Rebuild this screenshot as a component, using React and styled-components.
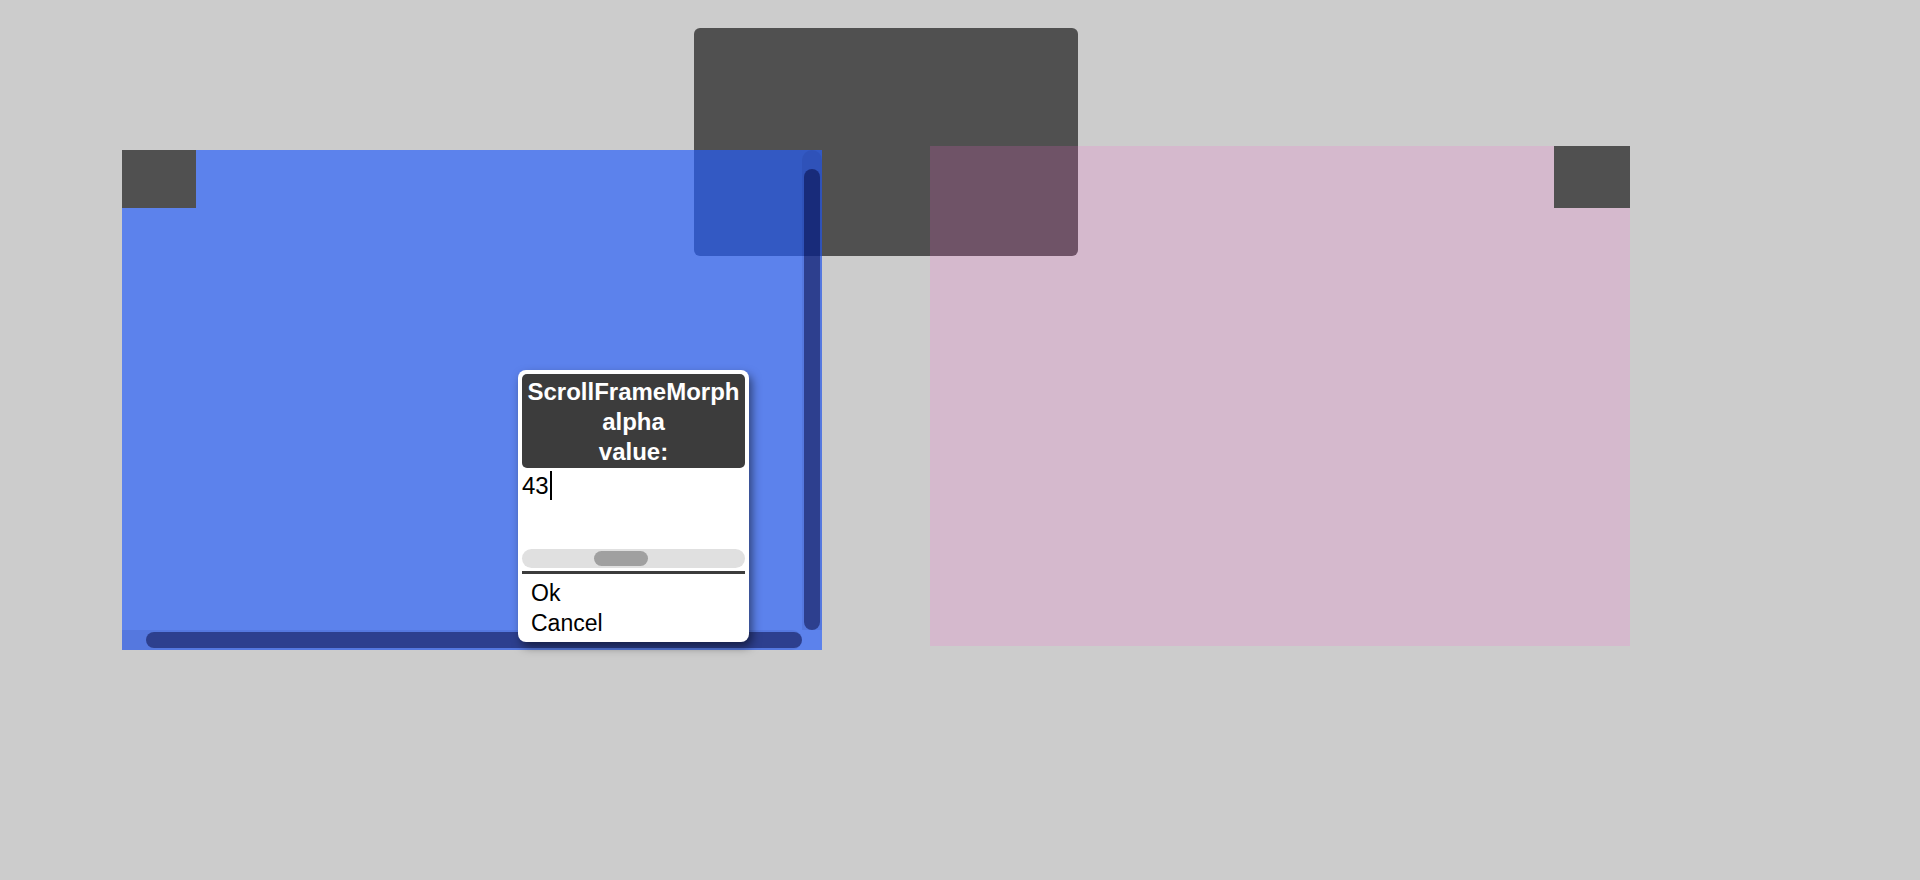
import React from 'react'
import styled, { createGlobalStyle } from 'styled-components'

const Global = createGlobalStyle`
    html, body {
        margin: 0;
        padding: 0;
        background: #cccccc;
        font-family: "Liberation Sans", Arial, sans-serif;
    }
`

const World = styled.div`
    position: relative;
    width: 1920px;
    height: 880px;
    overflow: hidden;
    background: #cccccc;
`

// morphs sit on a free canvas, their place is the content
const Morph = styled.div`
    position: absolute;
    left: ${p => p.x}px;
    top: ${p => p.y}px;
    width: ${p => p.w}px;
    height: ${p => p.h}px;
`

const DarkBox = styled(Morph)`
    background: #505050;
    border-radius: 6px;
`

const Frame = styled(Morph)`
    background: ${p => p.color};
`

const Block = styled.div`
    position: absolute;
    top: 0;
    ${p => (p.right ? 'right: 0;' : 'left: 0;')}
    width: ${p => p.w}px;
    height: ${p => p.h}px;
    background: #505050;
`

const VTrack = styled.div`
    position: absolute;
    right: 0;
    top: 0;
    width: 20px;
    height: 480px;
    border-radius: 10px 10px 0 0;
    background: rgba(0, 0, 60, 0.07);
    display: flex;
    justify-content: center;
    padding-top: 19px;
    box-sizing: border-box;
`

const HTrack = styled.div`
    position: absolute;
    left: 0;
    bottom: 0;
    width: 680px;
    height: 20px;
    border-radius: 0 10px 10px 0;
    background: rgba(0, 0, 60, 0.07);
    display: flex;
    align-items: center;
    padding-left: 24px;
    box-sizing: border-box;
`

const Thumb = styled.div`
    width: ${p => (p.vertical ? '16px' : '100%')};
    height: ${p => (p.vertical ? '100%' : '16px')};
    border-radius: 8px;
    background: rgba(0, 0, 50, 0.47);
`

const Dialog = styled(Morph)`
    box-sizing: border-box;
    background: #ffffff;
    border-radius: 8px;
    padding: 4px;
    display: flex;
    flex-direction: column;
    box-shadow: 3px 5px 10px rgba(0, 0, 0, 0.5);
`

const Title = styled.div`
    background: #3c3c3c;
    color: #ffffff;
    border-radius: 5px;
    font-weight: bold;
    font-size: 24px;
    line-height: 30px;
    text-align: center;
    padding: 3px 0 1px;
    white-space: nowrap;
`

const Input = styled.div`
    height: 82px;
    margin-top: 3px;
    font-size: 24px;
    line-height: 30px;
    color: #000;
    display: flex;
    align-items: flex-start;
`

const Caret = styled.span`
    display: inline-block;
    width: 2px;
    height: 29px;
    margin-left: 1px;
    background: #000;
`

const Slider = styled.div`
    height: 19px;
    flex: none;
    border-radius: 10px;
    background: #e0e0e0;
    display: flex;
    align-items: center;
    padding-left: ${p => p.offset}px;
`

const Knob = styled.div`
    width: 54px;
    height: 15px;
    border-radius: 8px;
    background: #a0a0a0;
`

const Divider = styled.div`
    height: 3px;
    flex: none;
    margin-top: 3px;
    background: #3c3c3c;
`

const Menu = styled.div`
    margin-top: 4px;
    display: flex;
    flex-direction: column;
`

const Item = styled.div`
    font-size: 23px;
    line-height: 30px;
    padding-left: 9px;
    color: #000;
`

export default function App() {
    return (
        <World>
            <Global />
            <DarkBox x={694} y={28} w={384} h={228} />
            <Frame x={122} y={150} w={700} h={500} color="rgba(38, 94, 252, 0.67)">
                <Block w={74} h={58} />
                <VTrack>
                    <Thumb vertical />
                </VTrack>
                <HTrack>
                    <Thumb />
                </HTrack>
            </Frame>
            <Frame x={930} y={146} w={700} h={500} color="rgba(254, 98, 209, 0.18)">
                <Block right w={76} h={62} />
            </Frame>
            <Dialog x={518} y={370} w={231} h={272}>
                <Title>
                    ScrollFrameMorph
                    <br />
                    alpha
                    <br />
                    value:
                </Title>
                <Input>
                    43
                    <Caret />
                </Input>
                <Slider offset={72}>
                    <Knob />
                </Slider>
                <Divider />
                <Menu>
                    <Item>Ok</Item>
                    <Item>Cancel</Item>
                </Menu>
            </Dialog>
        </World>
    )
}
